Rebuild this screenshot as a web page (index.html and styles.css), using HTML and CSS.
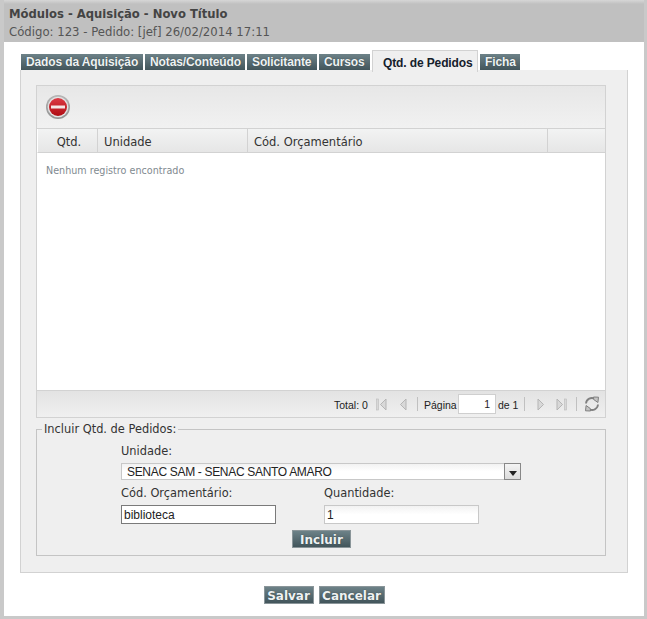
FILE: index.html
```html
<!DOCTYPE html>
<html lang="pt">
<head>
<meta charset="utf-8">
<title>Módulos - Aquisição - Novo Título</title>
<link rel="stylesheet" href="styles.css">
</head>
<body>
<div class="window">
  <header class="head">
    <div class="head-title">Módulos - Aquisição - Novo Título</div>
    <div class="head-sub">Código: 123 - Pedido: [jef] 26/02/2014 17:11</div>
  </header>
  <main class="content">
    <nav class="tabs">
      <span class="tab tab-a">Dados da Aquisição</span>
      <span class="tab tab-b">Notas/Conteúdo</span>
      <span class="tab tab-c">Solicitante</span>
      <span class="tab tab-d">Cursos</span>
      <span class="tab tab-active">Qtd. de Pedidos</span>
      <span class="tab tab-f">Ficha</span>
    </nav>
    <section class="panel">
      <div class="grid">
        <div class="toolbar">
          <svg class="remove-icon" width="24" height="24" viewBox="0 0 24 24">
            <defs>
              <radialGradient id="ring" cx="50%" cy="40%" r="60%"><stop offset="0" stop-color="#f4f4f4"/><stop offset="1" stop-color="#8f8f8f"/></radialGradient>
              <linearGradient id="red" x1="0" y1="0" x2="0" y2="1"><stop offset="0" stop-color="#dc3a44"/><stop offset="1" stop-color="#b00d14"/></linearGradient>
            </defs>
            <circle cx="12" cy="12" r="12" fill="url(#ring)"/>
            <circle cx="12" cy="12" r="10.300" fill="#e4e4e4"/>
            <circle cx="12" cy="12" r="9" fill="url(#red)"/>
            <rect x="5" y="10.500" width="14" height="3" fill="#f4e6e6"/>
          </svg>
        </div>
        <div class="grid-head">
          <div class="col col-qtd">Qtd.</div>
          <div class="col col-unidade">Unidade</div>
          <div class="col col-cod">Cód. Orçamentário</div>
          <div class="col col-rest"></div>
        </div>
        <div class="grid-body">Nenhum registro encontrado</div>
        <div class="grid-foot">
          <span class="pg-total pg-text">Total: 0</span>
          <svg class="pg-icon" width="14" height="14" viewBox="0 0 14 14"><rect x="2.500" y="2" width="2" height="11" fill="#d8d8d8" stroke="#bbb" stroke-width=".6"/><path d="M12 2v11L6.500 7.500z" fill="#d8d8d8" stroke="#b5b5b5"/></svg>
          <svg class="pg-icon pg-prev" width="14" height="14" viewBox="0 0 14 14"><path d="M10 2v11L4.500 7.500z" fill="#d8d8d8" stroke="#b5b5b5"/></svg>
          <span class="pg-sep pg-sep-a"></span>
          <span class="pg-label pg-text">Página</span>
          <span class="pg-input">1</span>
          <span class="pg-of pg-text">de 1</span>
          <span class="pg-sep pg-sep-b"></span>
          <svg class="pg-icon pg-next" width="14" height="14" viewBox="0 0 14 14"><path d="M4 2v11l5.500-5.500z" fill="#d8d8d8" stroke="#b5b5b5"/></svg>
          <svg class="pg-icon pg-last" width="14" height="14" viewBox="0 0 14 14"><path d="M2 2v11l5.500-5.500z" fill="#d8d8d8" stroke="#b5b5b5"/><rect x="9.500" y="2" width="2" height="11" fill="#d8d8d8" stroke="#bbb" stroke-width=".6"/></svg>
          <span class="pg-sep pg-sep-c"></span>
          <svg class="pg-refresh" width="16" height="16" viewBox="0 0 16 16" fill="none" stroke="#808080" stroke-width="1.800"><path d="M2 7.500A5.800 5.800 0 0 1 11 3"/><path d="M9.500 1l5 .2-.6 5.300-4.200-3z" fill="#c4c4c4" stroke-width="1"/><path d="M14 8.500A5.800 5.800 0 0 1 5 13"/><path d="M6.500 15l-5-.2.600-5.300 4.200 3z" fill="#c4c4c4" stroke-width="1"/></svg>
        </div>
      </div>
      <fieldset class="form">
        <legend class="legend">Incluir Qtd. de Pedidos:</legend>
        <div class="form-inner">
          <label class="label">Unidade:</label>
          <div class="select">
            <span class="select-text">SENAC SAM - SENAC SANTO AMARO</span>
            <span class="select-btn"><svg width="8" height="5" viewBox="0 0 8 5"><path d="M0 0h8L4 5z" fill="#222"/></svg></span>
          </div>
          <div class="form-row">
            <div class="form-col">
              <label class="label">Cód. Orçamentário:</label>
              <div class="input input-focus">biblioteca</div>
            </div>
            <div class="form-col">
              <label class="label">Quantidade:</label>
              <div class="input">1</div>
            </div>
          </div>
          <div class="form-action"><button class="btn btn-incluir" type="button">Incluir</button></div>
        </div>
      </fieldset>
    </section>
    <div class="actions">
      <button class="btn btn-salvar" type="button">Salvar</button>
      <button class="btn btn-cancelar" type="button">Cancelar</button>
    </div>
  </main>
</div>
</body>
</html>
```
FILE: styles.css
```css
* { box-sizing: border-box; }
html, body { margin: 0; padding: 0; background: #fff; }
body { width: 647px; height: 619px; overflow: hidden; font-family: "DejaVu Sans", Verdana, sans-serif; font-size: 11px; color: #333; }
.window { width: 647px; height: 619px; border-left: 4px solid #c9c9c9; border-right: 3px solid #c9c9c9; border-bottom: 3px solid #c9c9c9; display: flex; flex-direction: column; }
.head { height: 42px; flex: none; background: linear-gradient(#d6d6d6 0, #c0c0c0 4px); padding: 7px 0 0 5px; }
.head-title { font-weight: bold; font-size: 11.600px; line-height: 14px; color: #444; }
.head-sub { font-size: 11.700px; line-height: 14px; margin-top: 4px; color: #555; }
.content { flex: 1; padding: 8px 16px 0; display: flex; flex-direction: column; }
.tabs { display: flex; height: 20px; padding-left: 1px; align-items: flex-start; gap: 2px; position: relative; z-index: 1; font-family: "Liberation Sans", Arial, sans-serif; }
.tab { height: 16px; margin-top: 4px; padding: 0 0 0 5px; background: linear-gradient(#6d8288, #42555b); color: #eef2f3; font-weight: bold; font-size: 12px; letter-spacing: -0.120px; line-height: 17px; white-space: nowrap; text-shadow: 0 0 1px #2b3a3e; }
.tab-active { height: 22px; margin-top: 0; padding: 4px 0 0 10px; background: #efefef; color: #15202b; border: 1px solid #d2d2d2; border-bottom: 0; line-height: 17px; text-shadow: none; }
.tab-a { width: 122px; }
.tab-b { width: 100px; }
.tab-c { width: 70px; }
.tab-d { width: 51px; }
.tab-active { width: 106px; }
.tab-f { width: 40px; }
.panel { width: 608px; height: 503px; background: #efefef; border: 1px solid #d2d2d2; border-top: 0; padding: 15px 15px 0; display: flex; flex-direction: column; }
.grid { width: 570px; height: 333px; flex: none; border: 1px solid #d2d2d2; display: flex; flex-direction: column; background: #fff; }
.toolbar { height: 43px; flex: none; background: linear-gradient(#e7e7e7, #f1f1f1); border-bottom: 1px solid #d2d2d2; padding: 9px 0 0 9px; }
.remove-icon { display: block; }
.grid-head { height: 24px; flex: none; display: flex; background: linear-gradient(#f2f3f3, #e6e6e6); border-bottom: 1px solid #d2d2d2; border-left: 1px solid #fff; font-size: 11.500px; line-height: 26px; color: #333; }
.col { border-right: 1px solid #d2d2d2; }
.col-qtd { width: 60px; text-align: center; padding-left: 3px; }
.col-unidade { width: 150px; padding-left: 6px; }
.col-cod { width: 300px; padding-left: 6px; }
.col-rest { flex: 1; border-right: 0; }
.grid-body { flex: 1; padding: 11px 0 0 9px; color: #7f8a90; font-size: 9.600px; line-height: 13px; background: #fff; }
.grid-foot { height: 27px; flex: none; border-top: 1px solid #d2d2d2; background: linear-gradient(#e3e3e3, #f0f0f0); display: flex; align-items: center; justify-content: flex-end; padding-right: 5px; font-family: "Liberation Sans", Arial, sans-serif; font-size: 10.500px; color: #222; }
.pg-text { padding-top: 2px; }
.pg-total { width: 40px; flex: none; white-space: nowrap; }
.pg-icon { flex: none; }
.pg-prev { margin-left: 8px; }
.pg-sep { width: 1px; height: 14px; flex: none; background: #c0c0c0; }
.pg-sep-a { margin-left: 7px; }
.pg-label { width: 32px; flex: none; margin-left: 6px; white-space: nowrap; }
.pg-input { width: 38px; height: 20px; flex: none; margin-left: 2px; background: #fff; border: 1px solid #cfcfcf; text-align: right; padding-right: 5px; line-height: 19px; }
.pg-of { width: 20px; flex: none; margin-left: 2px; white-space: nowrap; }
.pg-sep-b { margin-left: 6px; }
.pg-next { margin-left: 9px; }
.pg-last { margin-left: 7px; }
.pg-sep-c { margin-left: 7px; }
.pg-refresh { margin-left: 7px; flex: none; }
.form { width: 570px; height: 134px; flex: none; margin: 4px 0 0; border: 1px solid #c4c4c4; padding: 0; }
.legend { margin-left: 5px; padding: 0 2px; line-height: 14px; font-size: 11.400px; color: #333; }
.form-inner { padding: 8px 0 0 84px; }
.label { display: block; font-size: 11.400px; line-height: 14px; color: #333; height: 14px; }
.select { width: 400px; height: 17px; margin-top: 5px; display: flex; justify-content: space-between; align-items: stretch; border: 1px solid #c8c8c8; background: linear-gradient(#f2f2f2, #fff 50%); font-family: "Liberation Sans", Arial, sans-serif; font-size: 12px; letter-spacing: -0.320px; line-height: 16px; color: #222; padding-left: 5px; }
.select-text { white-space: nowrap; }
.select-btn { width: 17px; flex: none; margin: -1px -1px -1px 0; border: 1px solid #888; background: linear-gradient(#f4f4f4, #dcdcdc); display: flex; align-items: flex-end; justify-content: center; padding-bottom: 3px; }
.select-btn svg { display: block; }
.form-row { display: flex; gap: 48px; margin-top: 6px; }
.form-col { width: 155px; }
.input { width: 155px; height: 19px; margin-top: 5px; border: 1px solid #c8c8c8; background: linear-gradient(#f2f2f2, #fff 50%); font-family: "Liberation Sans", Arial, sans-serif; font-size: 12px; line-height: 19px; padding-left: 2px; color: #222; }
.input-focus { border-color: #7a7a7a; background: #fff; }
.form-action { padding-left: 171px; margin-top: 6px; height: 18px; }
.btn { display: block; margin: 0; padding: 1px 0 0; height: 18px; border: 1px solid #8a9599; background: linear-gradient(#6d8288, #42555b); color: #eef2f3; font-family: "DejaVu Sans", Verdana, sans-serif; font-weight: bold; font-size: 12px; line-height: 16px; text-shadow: 0 0 1px #2b3a3e; white-space: nowrap; text-align: center; }
.btn-incluir { width: 59px; }
.btn-salvar { width: 50px; }
.btn-cancelar { width: 66px; }
.actions { display: flex; justify-content: center; gap: 5px; margin-top: 13px; }
```
